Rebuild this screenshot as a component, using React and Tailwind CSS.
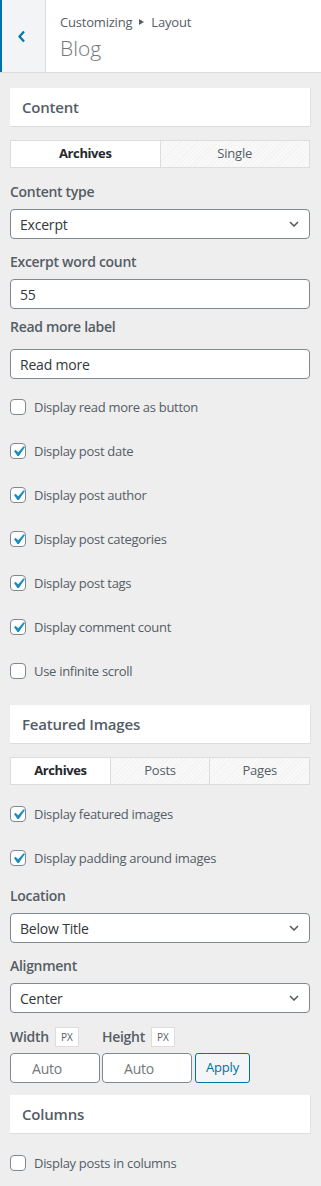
import React from "react";

const hatch =
  "bg-[repeating-linear-gradient(135deg,#f9f9f9_0px,#f9f9f9_2px,#f3f3f3_2px,#f3f3f3_3px)]";

function Chevron() {
  return (
    <svg width="10" height="6" viewBox="0 0 10 6" className="shrink-0">
      <path d="M1 1 L5 5 L9 1" stroke="#50575e" strokeWidth="1.5" fill="none" />
    </svg>
  );
}

function Check({ checked, label, className = "" }) {
  return (
    <div className={"flex items-center h-[16px] " + className}>
      <span className="relative w-[16px] h-[16px] rounded-[4px] border border-[#7e8993] bg-white shrink-0">
        {checked && (
          <svg
            width="21"
            height="21"
            viewBox="0 0 20 20"
            className="absolute left-[-3px] top-[-3px]"
          >
            <path
              d="M14.83 4.89l1.34.94-5.81 8.38H9.02L5.78 9.67l1.34-1.25 2.57 2.4z"
              fill="#1e8cbe"
            />
          </svg>
        )}
      </span>
      <span className="ml-[8px] text-[13px] leading-[20px] text-[#555d66] whitespace-nowrap tracking-[-0.3px]">
        {label}
      </span>
    </div>
  );
}

function Label({ children, className = "" }) {
  return (
    <div
      className={
        "text-[14px] leading-[20px] font-semibold text-[#555d66] tracking-[-0.3px] " +
        className
      }
    >
      {children}
    </div>
  );
}

function Select({ value, className = "" }) {
  return (
    <div
      className={
        "h-[30px] rounded-[4px] border border-[#7e8993] bg-white flex items-center justify-between pl-[9px] pr-[10px] text-[14px] text-[#32373c] tracking-[-0.2px] " +
        className
      }
    >
      <span>{value}</span>
      <Chevron />
    </div>
  );
}

function Input({ value, className = "" }) {
  return (
    <div
      className={
        "h-[30px] rounded-[4px] border border-[#7e8993] bg-white flex items-center pl-[9px] text-[14px] text-[#32373c] tracking-[-0.2px] " +
        className
      }
    >
      {value}
    </div>
  );
}

function SectionTitle({ children, className = "" }) {
  return (
    <div
      className={
        "h-[39px] bg-white border-b border-[#dddddd] shadow-[1px_0_0_#e2e2e2] flex items-center pl-[12px] text-[15px] font-semibold text-[#555d66] tracking-[-0.2px] " +
        className
      }
    >
      {children}
    </div>
  );
}

function Tabs({ items, className = "" }) {
  return (
    <div
      className={
        "h-[28px] flex border border-[#dddddd] text-[13px] " + className
      }
    >
      {items.map((t, i) => (
        <div
          key={t}
          className={
            "flex-1 flex items-center justify-center " +
            (i > 0 ? "border-l border-[#dddddd] " : "") +
            (i === 0
              ? "bg-white font-bold text-[#23282d] tracking-[-0.4px]"
              : hatch + " text-[#555d66] tracking-[-0.2px]")
          }
        >
          {t}
        </div>
      ))}
    </div>
  );
}

function Px() {
  return (
    <span className="ml-[6px] h-[20px] w-[24px] bg-white border border-[#dddddd] flex items-center justify-center text-[10px] text-[#555d66]">
      PX
    </span>
  );
}

export default function App() {
  return (
    <div className="w-[321px] min-h-[1186px] bg-[#eeeeee] font-['Open_Sans',sans-serif] text-[#555d66]">
      {/* Header */}
      <div className="h-[73px] bg-white border-b border-[#dddddd] flex">
        <div className="w-[46px] h-full border-l-2 border-l-[#0073aa] border-r border-r-[#dddddd] bg-[#f3f4f5] flex items-center pl-[15px]">
          <svg width="9" height="13" viewBox="0 0 9 13">
            <path
              d="M7 1.5 L2.5 6.5 L7 11.5"
              stroke="#0073aa"
              strokeWidth="2.2"
              fill="none"
            />
          </svg>
        </div>
        <div className="pl-[14px] pt-[12px]">
          <div className="flex items-center text-[13px] leading-[20px] text-[#555d66] tracking-[-0.2px]">
            <span>Customizing</span>
            <svg width="5" height="6" viewBox="0 0 5 6" className="mx-[7px]">
              <polygon points="0,0 5,3 0,6" fill="#555d66" />
            </svg>
            <span>Layout</span>
          </div>
          <div className="mt-[3px] text-[21px] leading-[26px] font-light text-[#72777c]">
            Blog
          </div>
        </div>
      </div>

      <div className="pl-[10px] pr-[11px]">
        {/* Content */}
        <SectionTitle className="mt-[15px]">Content</SectionTitle>
        <Tabs items={["Archives", "Single"]} className="mt-[13px]" />

        <Label className="mt-[14px]">Content type</Label>
        <Select value="Excerpt" className="mt-[7px]" />

        <Label className="mt-[13px]">Excerpt word count</Label>
        <Input value="55" className="mt-[7px]" />

        <Label className="mt-[8px]">Read more label</Label>
        <Input value="Read more" className="mt-[12px]" />

        <Check label="Display read more as button" className="mt-[20px]" />
        <Check checked label="Display post date" className="mt-[28px]" />
        <Check checked label="Display post author" className="mt-[28px]" />
        <Check checked label="Display post categories" className="mt-[28px]" />
        <Check checked label="Display post tags" className="mt-[28px]" />
        <Check checked label="Display comment count" className="mt-[28px]" />
        <Check label="Use infinite scroll" className="mt-[28px]" />

        {/* Featured Images */}
        <SectionTitle className="mt-[26px]">Featured Images</SectionTitle>
        <Tabs items={["Archives", "Posts", "Pages"]} className="mt-[13px]" />

        <Check checked label="Display featured images" className="mt-[21px]" />
        <Check
          checked
          label="Display padding around images"
          className="mt-[28px]"
        />

        <Label className="mt-[20px]">Location</Label>
        <Select value="Below Title" className="mt-[7px]" />

        <Label className="mt-[13px]">Alignment</Label>
        <Select value="Center" className="mt-[7px]" />

        <div className="mt-[14px] flex">
          <div className="w-[92px] flex items-center">
            <Label>Width</Label>
            <Px />
          </div>
          <div className="w-[92px] flex items-center">
            <Label>Height</Label>
            <Px />
          </div>
        </div>

        <div className="mt-[6px] flex">
          <div className="w-[90px] h-[30px] rounded-[4px] border border-[#7e8993] bg-white flex items-center pl-[21px] text-[14px] text-[#72777c] tracking-[-0.2px]">
            Auto
          </div>
          <div className="ml-[2px] w-[90px] h-[30px] rounded-[4px] border border-[#7e8993] bg-white flex items-center pl-[21px] text-[14px] text-[#72777c] tracking-[-0.2px]">
            Auto
          </div>
          <div className="ml-[3px] w-[55px] h-[30px] rounded-[3px] border border-[#0071a1] bg-[#f3f5f6] flex items-center justify-center text-[13px] text-[#0071a1] tracking-[-0.2px]">
            Apply
          </div>
        </div>

        {/* Columns */}
        <SectionTitle className="mt-[12px]">Columns</SectionTitle>
        <Check label="Display posts in columns" className="mt-[21px]" />
      </div>
    </div>
  );
}
